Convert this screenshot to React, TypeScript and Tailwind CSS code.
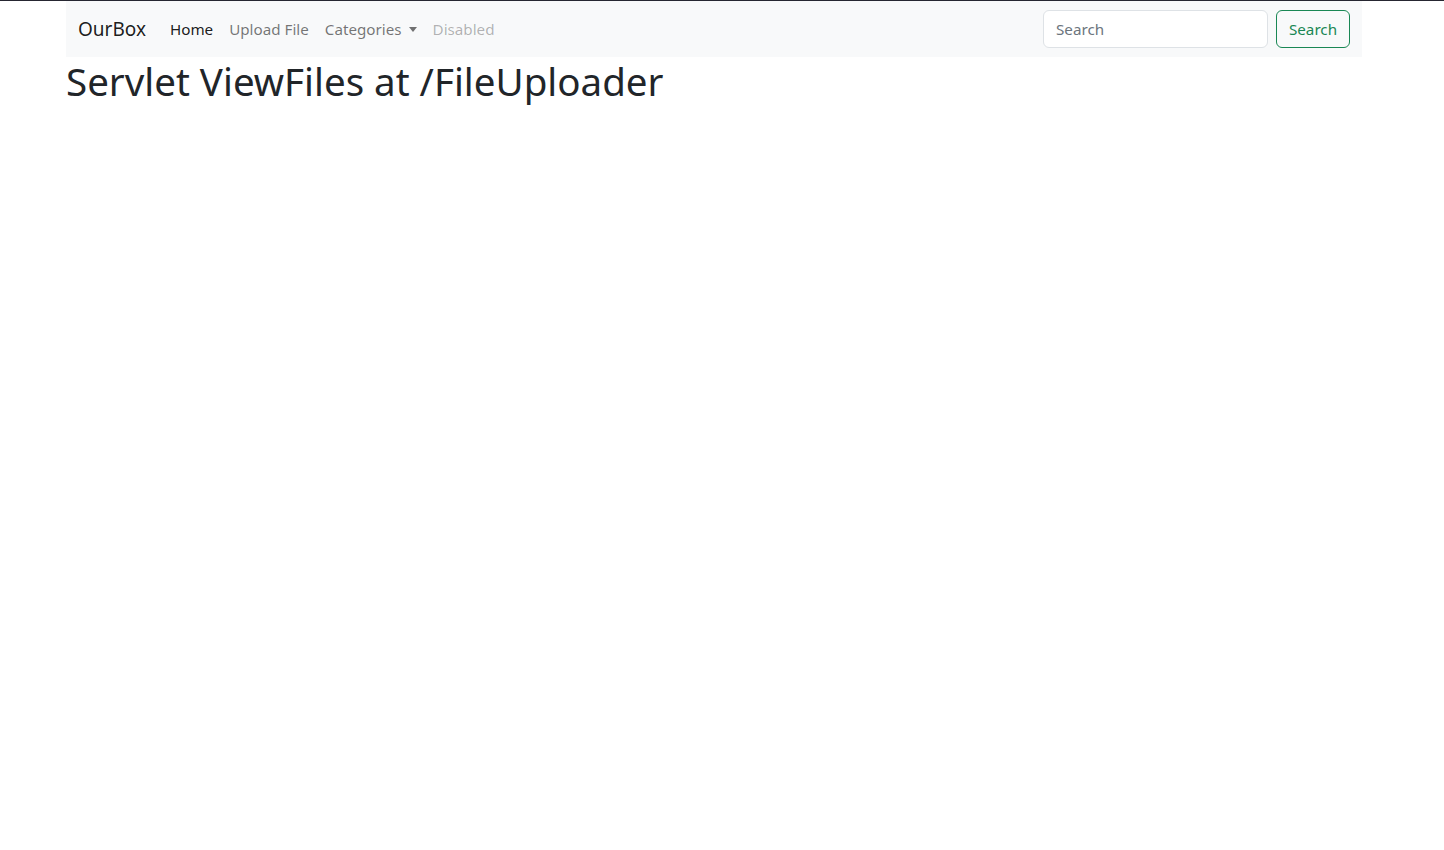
import React from 'react';

const font = { fontFamily: '"Noto Sans", "Open Sans", sans-serif' };

const App = () => {
  return (
    <div className="min-h-[850px] bg-white border-t border-[#262631] text-[#212529]" style={font}>
      {/* Navbar */}
      <div className="w-[1428px]">
        <div className="mx-auto w-[1320px] px-3">
          <nav className="flex items-center justify-between bg-[#f8f9fa] px-3 py-2 h-[56px]">
            <div className="flex items-center">
              <a className="text-[19px] leading-[30px] text-black/90 mr-4 pb-[1px]">OurBox</a>
              <ul className="flex items-center text-[15.2px] leading-6">
                <li className="px-2 text-black/90">Home</li>
                <li className="px-2 text-black/55">Upload File</li>
                <li className="px-2 text-black/55 flex items-center">
                  Categories
                  <span className="ml-[7px] mt-[1px] w-0 h-0 border-x-[4px] border-x-transparent border-t-[5px] border-t-black/55"></span>
                </li>
                <li className="px-2 text-black/30">Disabled</li>
              </ul>
            </div>
            <form className="flex items-center">
              <input
                className="w-[225px] h-[38px] rounded-[6px] border border-[#dee2e6] bg-white px-3 text-[15.2px] placeholder:text-[#6c757d] outline-none"
                placeholder="Search"
                style={font}
              />
              <button
                type="button"
                className="ml-2 h-[38px] w-[74px] rounded-[6px] border border-[#198754] text-[15.2px] text-[#198754]"
                style={font}
              >
                Search
              </button>
            </form>
          </nav>
          <h1 className="text-[38.5px] leading-[48px] font-normal mb-2">Servlet ViewFiles at /FileUploader</h1>
        </div>
      </div>
    </div>
  );
};

export default App;
